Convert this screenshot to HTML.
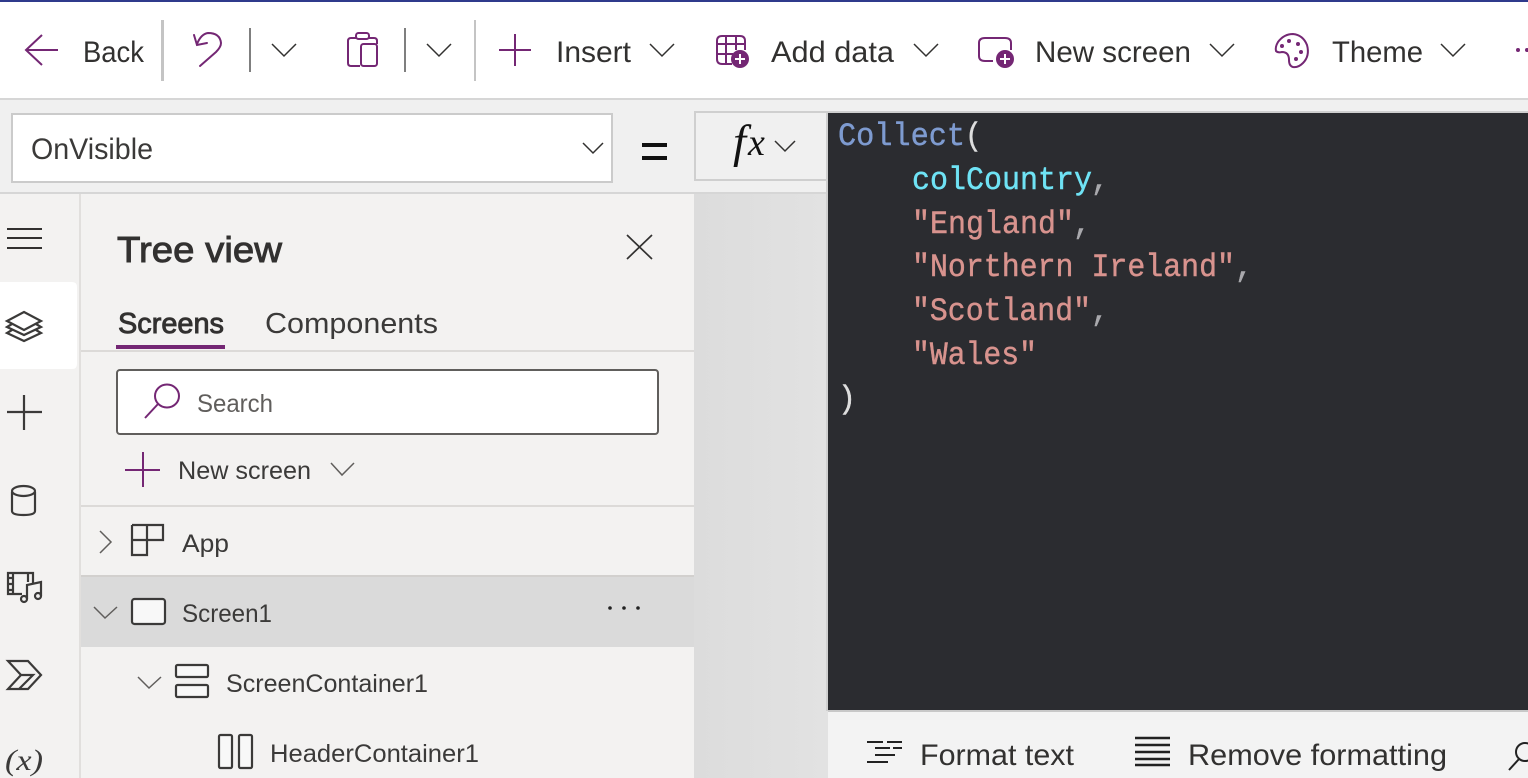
<!DOCTYPE html>
<html lang="en">
<head>
<meta charset="utf-8">
<title>Power Apps Studio</title>
<style>
html,body{margin:0;padding:0;width:1528px;height:778px;overflow:hidden;background:#f0f0f0}
svg{display:block;position:absolute;left:0;top:0}
text{font-family:"Liberation Sans",sans-serif;white-space:pre}
.t{font-size:30px;fill:#323130}
.s{font-size:25px;fill:#3b3a39}
.c{font-family:"Liberation Mono",monospace;font-size:32px;stroke-width:.45px}
.p{stroke:#742774;fill:none}
.k{stroke:#3b3a39;fill:none}
.d{stroke:#323130;fill:none;stroke-width:1.5}
.h{stroke:#323130;stroke-width:.9px}
</style>
</head>
<body>
<svg width="1528" height="778" viewBox="0 0 1528 778" stroke-width="2.2" xmlns="http://www.w3.org/2000/svg">
<defs>
<linearGradient id="g" x1="0" y1="0" x2="1" y2="0"><stop offset="0" stop-color="#dcdcdc"/><stop offset="1" stop-color="#e2e2e2"/></linearGradient>
</defs>
<!-- backgrounds -->
<rect width="1528" height="778" fill="#f0f0f0"/>
<rect width="1528" height="98" fill="#fff"/>
<rect width="1528" height="2" fill="#2f3a8c"/>
<rect y="98" width="1528" height="2" fill="#d6d6d6"/>
<rect y="192" width="828" height="2" fill="#d6d6d6"/>
<rect y="194" width="694" height="584" fill="#f3f2f1"/>
<rect x="79" y="194" width="2" height="584" fill="#e1dfdd"/>
<rect x="694" y="194" width="134" height="584" fill="url(#g)"/>
<!-- toolbar -->
<path class="p" d="M58 50H26M42 35L26 50L42 65" stroke-width="2"/>
<text class="t" x="83" y="62" textLength="61" lengthAdjust="spacingAndGlyphs">Back</text>
<rect x="161" y="20" width="3" height="61" fill="#c4c4c4"/>
<path class="p" d="M200 66L216 52Q221 47 221 43Q220 33 208 33Q201 34 197 44M194 35L197 45L207 43" stroke-linecap="round" stroke-width="2"/>
<rect x="249" y="28" width="2" height="44" fill="#7f7f7f"/>
<path class="d" d="M272 44L284 56L296 44"/>
<path class="p" d="M356 38H351Q348 38 348 41V63Q348 66 351 66H360M369 38H374Q377 38 377 41V44" stroke-width="2"/>
<rect class="p" x="356" y="33" width="13" height="6" rx="2.5" stroke-width="2"/>
<rect class="p" x="361" y="44" width="16" height="22" rx="2.5" stroke-width="2"/>
<rect x="404" y="28" width="2" height="44" fill="#7f7f7f"/>
<path class="d" d="M427 44L439 56L451 44"/>
<rect x="474" y="20" width="2" height="61" fill="#c4c4c4"/>
<path class="p" d="M499 50H531M515 34V66" stroke-width="2"/>
<text class="t" x="556" y="62" textLength="75" lengthAdjust="spacingAndGlyphs">Insert</text>
<path class="d" d="M650 44L662 56L674 44"/>
<!-- add data -->
<path class="p" d="M732 64H722Q717 64 717 59V41Q717 36 722 36H740Q745 36 745 41V50M717 44H745M717 54H733M726 36V64M736 36V50" stroke-width="2"/>
<circle cx="740" cy="59" r="9" fill="#742774"/>
<path d="M735 59H745M740 54V64" stroke="#fff" stroke-width="2"/>
<text class="t" x="771" y="62" textLength="123" lengthAdjust="spacingAndGlyphs">Add data</text>
<path class="d" d="M914 44L926 56L938 44"/>
<!-- new screen -->
<path class="p" d="M993 61H985Q979 61 979 56V43Q979 38 985 38H1005Q1011 38 1011 43V50" stroke-width="2"/>
<circle cx="1005" cy="59" r="9" fill="#742774"/>
<path d="M1000 59H1010M1005 54V64" stroke="#fff" stroke-width="2"/>
<text class="t" x="1035" y="62" textLength="156" lengthAdjust="spacingAndGlyphs">New screen</text>
<path class="d" d="M1210 44L1222 56L1234 44"/>
<!-- theme -->
<path class="p" d="M1293 67Q1289 66 1289 60Q1289 52 1282 52Q1278 53 1276 51Q1275 47 1278 42Q1284 34 1293 34Q1303 35 1307 45Q1310 56 1303 63Q1298 68 1293 67Z" stroke-width="2"/>
<g fill="#742774"><circle cx="1282" cy="46" r="2"/><circle cx="1289" cy="41" r="2"/><circle cx="1298" cy="44" r="2"/><circle cx="1301" cy="52" r="2"/><circle cx="1296" cy="59" r="2"/></g>
<text class="t" x="1332" y="62" textLength="91" lengthAdjust="spacingAndGlyphs">Theme</text>
<path class="d" d="M1441 44L1453 56L1465 44"/>
<g fill="#742774"><circle cx="1518" cy="50" r="2"/><circle cx="1527" cy="50" r="2"/></g>
<!-- formula bar -->
<rect x="12" y="114" width="600" height="68" fill="#fff" stroke="#cbcbcb" stroke-width="2"/>
<text x="31" y="159" font-size="30" fill="#3b3a39" textLength="122" lengthAdjust="spacingAndGlyphs">OnVisible</text>
<path class="d" d="M583 143L593 153L603 143"/>
<rect x="642" y="143" width="25" height="4" fill="#111"/>
<rect x="642" y="156" width="25" height="4" fill="#111"/>
<rect x="695" y="112" width="133" height="68" fill="#f0f0f0" stroke="#cfcfcf" stroke-width="2"/>
<text x="733" y="157" style="font-family:'Liberation Serif',serif;font-style:italic" font-size="47" fill="#111">f</text>
<text x="748" y="155" style="font-family:'Liberation Serif',serif;font-style:italic" font-size="38" fill="#111">x</text>
<path class="d" d="M775 141L785 151L795 141"/>
<!-- code editor -->
<rect x="826" y="111" width="702" height="2" fill="#cfcfcf"/>
<rect x="826" y="111" width="2" height="600" fill="#cfcfcf"/>
<rect x="828" y="113" width="700" height="597" fill="#2b2c30"/>
<text class="c" x="838" y="145" fill="#7e9bd0" stroke="#7e9bd0" textLength="127" lengthAdjust="spacingAndGlyphs">Collect</text>
<text class="c" x="965" y="145" fill="#dedede" stroke="#dedede" textLength="17" lengthAdjust="spacingAndGlyphs">(</text>
<text class="c" x="912" y="189" fill="#6fe3f5" stroke="#6fe3f5" textLength="180" lengthAdjust="spacingAndGlyphs">colCountry</text>
<text class="c" x="1091" y="189" fill="#a9a9ad" stroke="#a9a9ad" textLength="18" lengthAdjust="spacingAndGlyphs">,</text>
<text class="c" x="912" y="233" fill="#d8938e" stroke="#d8938e" textLength="162" lengthAdjust="spacingAndGlyphs">"England"</text>
<text class="c" x="1073" y="233" fill="#a9a9ad" stroke="#a9a9ad" textLength="18" lengthAdjust="spacingAndGlyphs">,</text>
<text class="c" x="912" y="276" fill="#d8938e" stroke="#d8938e" textLength="323" lengthAdjust="spacingAndGlyphs">"Northern Ireland"</text>
<text class="c" x="1235" y="276" fill="#a9a9ad" stroke="#a9a9ad" textLength="18" lengthAdjust="spacingAndGlyphs">,</text>
<text class="c" x="912" y="320" fill="#d8938e" stroke="#d8938e" textLength="179" lengthAdjust="spacingAndGlyphs">"Scotland"</text>
<text class="c" x="1091" y="320" fill="#a9a9ad" stroke="#a9a9ad" textLength="18" lengthAdjust="spacingAndGlyphs">,</text>
<text class="c" x="912" y="364" fill="#d8938e" stroke="#d8938e" textLength="125" lengthAdjust="spacingAndGlyphs">"Wales"</text>
<text class="c" x="838" y="408" fill="#dedede" stroke="#dedede" textLength="18" lengthAdjust="spacingAndGlyphs">)</text>
<!-- bottom strip -->
<rect x="828" y="710" width="700" height="2" fill="#c8c8c8"/>
<rect x="828" y="712" width="700" height="66" fill="#f3f3f3"/>
<path d="M867 742H883M887 742H902M875 748H890M893 748H902M875 755H895M867 762H888" stroke="#222" stroke-width="2" fill="none"/>
<text class="t" x="920" y="765" textLength="154" lengthAdjust="spacingAndGlyphs">Format text</text>
<path d="M1135 738H1170M1135 745H1170M1135 752H1170M1135 759H1170M1135 765H1170" stroke="#222" stroke-width="2.4" fill="none"/>
<text class="t" x="1188" y="765" textLength="259" lengthAdjust="spacingAndGlyphs">Remove formatting</text>
<circle cx="1525" cy="752" r="9" fill="none" stroke="#222" stroke-width="2"/>
<path d="M1519 759L1509 770" stroke="#222" stroke-width="2"/>
<!-- left rail -->
<path d="M7 229H42M7 238H42M7 248H42" stroke="#323130" stroke-width="2" fill="none"/>
<path d="M0 282H72Q77 282 77 287V364Q77 369 72 369H0Z" fill="#fff"/>
<path d="M24 312L41 321L24 330L7 321Z" class="k"/>
<path d="M12 324L7 327L24 335L41 327L36 324M12 330L7 333L24 341L41 333L36 330" class="k"/>
<path d="M7 412H42M24 395V430" class="k"/>
<path d="M12 492V511Q12 515 23.500 515Q35 515 35 511V492" class="k"/>
<ellipse cx="23.500" cy="491" rx="11.500" ry="5" class="k"/>
<path d="M22 594H8V573H33V584M13 573V594M28 573V582" class="k"/>
<path d="M8 578H12M8 584H12M8 590H12" class="k"/>
<path d="M27 599V585L41 582V596" class="k"/>
<circle cx="24" cy="599" r="3" class="k"/><circle cx="38" cy="596" r="3" class="k"/>
<path d="M8 661H28L41 675L28 689H8L21 675ZM19 689L33 675H21" class="k"/>
<text x="5" y="770" style="font-family:'Liberation Serif',serif;font-style:italic" font-size="30" fill="#3b3a39" textLength="38" lengthAdjust="spacingAndGlyphs">(x)</text>
<!-- tree view -->
<text class="h" x="117" y="262" font-size="36" fill="#323130" textLength="165" lengthAdjust="spacingAndGlyphs">Tree view</text>
<path d="M627 235L652 259M652 235L627 259" stroke="#323130" stroke-width="1.700"/>
<text class="h" x="118" y="333" font-size="29" fill="#323130" textLength="106" lengthAdjust="spacingAndGlyphs">Screens</text>
<text x="265" y="333" font-size="29" fill="#3b3a39" textLength="173" lengthAdjust="spacingAndGlyphs">Components</text>
<rect x="116" y="345" width="109" height="4" fill="#742774"/>
<rect x="81" y="350" width="613" height="2" fill="#dcdad8"/>
<rect x="117" y="370" width="541" height="64" rx="3" fill="#fff" stroke="#605e5c" stroke-width="2"/>
<ellipse cx="167" cy="396" rx="12" ry="11.500" class="p" stroke-width="2"/>
<path class="p" d="M158 404L145 418" stroke-width="2"/>
<text x="197" y="412" font-size="25" fill="#605e5c" textLength="76" lengthAdjust="spacingAndGlyphs">Search</text>
<path class="p" d="M125 470H160M143 452V487" stroke-width="2"/>
<text class="s" x="178" y="479" textLength="133" lengthAdjust="spacingAndGlyphs">New screen</text>
<path d="M331 463L342 475L354 463" stroke="#605e5c" stroke-width="1.500" fill="none"/>
<rect x="81" y="505" width="613" height="2" fill="#dcdad8"/>
<!-- tree rows -->
<path d="M100 531L111 542L100 553" stroke="#605e5c" stroke-width="1.500" fill="none"/>
<path class="k" d="M132 525H163V540H132M147 525V540M132 525V555H147V540"/>
<text class="s" x="182" y="552" textLength="47" lengthAdjust="spacingAndGlyphs">App</text>
<rect x="81" y="575" width="613" height="72" fill="#dadada"/>
<rect x="81" y="575" width="613" height="2" fill="#d2d0ce"/>
<path d="M94 607L105 618L117 607" stroke="#605e5c" stroke-width="1.500" fill="none"/>
<rect x="132" y="599" width="33" height="25" rx="2.500" class="k" style="fill:#f8f8f8"/>
<text class="s" x="182" y="622" textLength="90" lengthAdjust="spacingAndGlyphs">Screen1</text>
<g fill="#222"><circle cx="610" cy="608" r="1.800"/><circle cx="624" cy="608" r="1.800"/><circle cx="638" cy="608" r="1.800"/></g>
<path d="M138 677L149 688L161 677" stroke="#605e5c" stroke-width="1.500" fill="none"/>
<rect x="176" y="665" width="32" height="12" rx="1.500" style="fill:#f8f8f8" class="k"/>
<rect x="176" y="685" width="32" height="12" rx="1.500" style="fill:#f8f8f8" class="k"/>
<text class="s" x="226" y="692" textLength="202" lengthAdjust="spacingAndGlyphs">ScreenContainer1</text>
<rect x="219" y="735" width="13" height="33" rx="1.500" style="fill:#f8f8f8" class="k"/>
<rect x="239" y="735" width="13" height="33" rx="1.500" style="fill:#f8f8f8" class="k"/>
<text class="s" x="270" y="762" textLength="209" lengthAdjust="spacingAndGlyphs">HeaderContainer1</text>
</svg>
</body>
</html>
